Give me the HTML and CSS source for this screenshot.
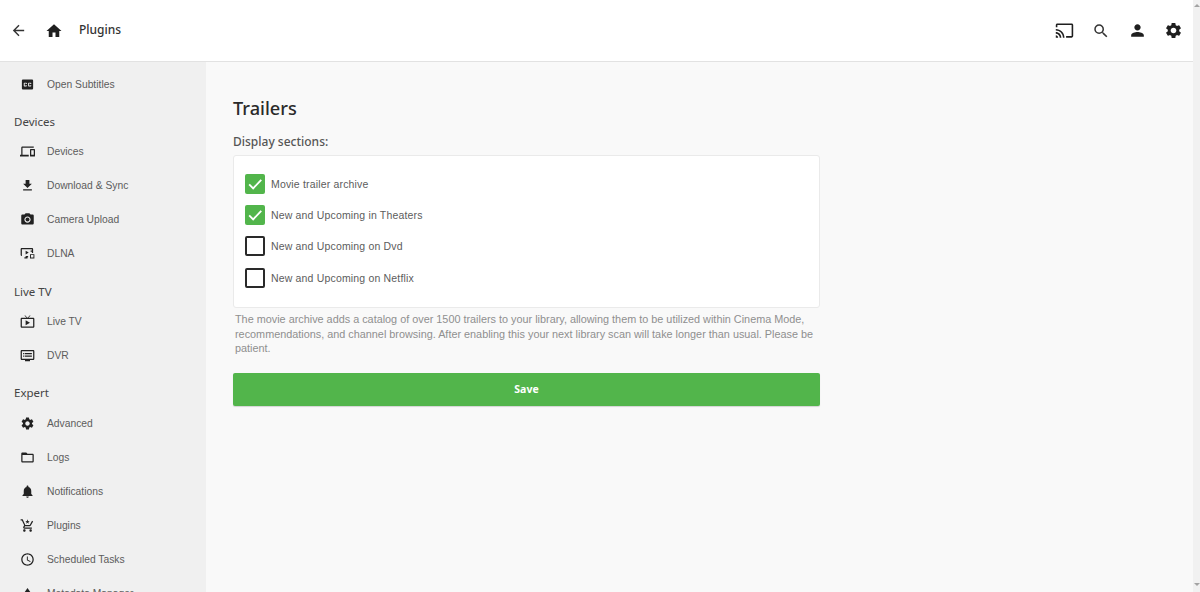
FILE: index.html
```html
<!DOCTYPE html>
<html lang="en">
<head>
<meta charset="utf-8">
<title>Plugins</title>
<link rel="stylesheet" href="styles.css">
</head>
<body>
<svg class="defs" width="0" height="0" aria-hidden="true"><defs>
<symbol id="gear" viewBox="0 0 24 24"><path d="M19.14 12.94c.04-.3.06-.61.06-.94 0-.32-.02-.64-.07-.94l2.03-1.58a.49.49 0 0 0 .12-.61l-1.92-3.32a.488.488 0 0 0-.59-.22l-2.39.96c-.5-.38-1.03-.7-1.62-.94l-.36-2.54a.484.484 0 0 0-.48-.41h-3.84c-.24 0-.43.17-.47.41l-.36 2.54c-.59.24-1.13.57-1.62.94l-2.39-.96c-.22-.08-.47 0-.59.22L2.74 8.87c-.12.21-.08.47.12.61l2.03 1.58c-.05.3-.09.63-.09.94s.02.64.07.94l-2.03 1.58a.49.49 0 0 0-.12.61l1.92 3.32c.12.22.37.29.59.22l2.39-.96c.5.38 1.03.7 1.62.94l.36 2.54c.05.24.24.41.48.41h3.84c.24 0 .44-.17.47-.41l.36-2.54c.59-.24 1.13-.56 1.62-.94l2.39.96c.22.08.47 0 .59-.22l1.92-3.32c.12-.22.07-.47-.12-.61l-2.01-1.58zM12 15.6c-1.98 0-3.6-1.62-3.6-3.6s1.62-3.6 3.6-3.6 3.6 1.62 3.6 3.6-1.62 3.6-3.6 3.6z"/></symbol>
</defs></svg>
<div class="page">
<header class="topbar">
  <div class="top-left">
    <button class="icon-btn"><svg class="back" viewBox="0 0 24 24"><path d="M20 11H7.830l5.590-5.590L12 4l-8 8 8 8 1.410-1.410L7.830 13H20v-2z"/></svg></button>
    <button class="icon-btn"><svg viewBox="0 0 24 24"><path d="M10 20v-6h4v6h5v-8h3L12 3 2 12h3v8z"/></svg></button>
    <span class="page-title">Plugins</span>
  </div>
  <div class="top-right">
    <button class="icon-btn"><svg viewBox="0 0 24 24"><path d="M21 3H3c-1.100 0-2 .9-2 2v3h2V5h18v14h-7v2h7c1.100 0 2-.9 2-2V5c0-1.100-.9-2-2-2zM1 18v3h3c0-1.660-1.340-3-3-3zm0-4v2c2.760 0 5 2.240 5 5h2c0-3.870-3.130-7-7-7zm0-4v2c4.970 0 9 4.030 9 9h2c0-6.080-4.930-11-11-11z"/></svg></button>
    <button class="icon-btn"><svg class="search" viewBox="0 0 24 24"><path d="M15.500 14h-.79l-.28-.27A6.471 6.471 0 0 0 16 9.500 6.500 6.500 0 1 0 9.500 16c1.610 0 3.090-.59 4.230-1.570l.27.28v.79l5 4.990L20.490 19l-4.990-5zm-6 0C7.010 14 5 11.990 5 9.500S7.010 5 9.500 5 14 7.010 14 9.500 11.990 14 9.500 14z"/></svg></button>
    <button class="icon-btn"><svg viewBox="0 0 24 24"><path d="M12 12c2.210 0 4-1.790 4-4s-1.790-4-4-4-4 1.790-4 4 1.790 4 4 4zm0 2c-2.670 0-8 1.340-8 4v2h16v-2c0-2.660-5.330-4-8-4z"/></svg></button>
    <button class="icon-btn"><svg viewBox="0 0 24 24"><use href="#gear"/></svg></button>
  </div>
</header>
<div class="layout">
  <nav class="sidebar">
    <a class="nav-item"><svg viewBox="0 0 24 24"><path d="M19 4H5c-1.110 0-2 .9-2 2v12c0 1.100.89 2 2 2h14c1.100 0 2-.9 2-2V6c0-1.100-.9-2-2-2zm-8 7H9.500v-.5h-2v3h2V13H11v1c0 .55-.45 1-1 1H7c-.55 0-1-.45-1-1v-4c0-.55.45-1 1-1h3c.55 0 1 .45 1 1v1zm7 0h-1.500v-.5h-2v3h2V13H18v1c0 .55-.45 1-1 1h-3c-.55 0-1-.45-1-1v-4c0-.55.45-1 1-1h3c.55 0 1 .45 1 1v1z"/></svg><span>Open Subtitles</span></a>
    <h3 class="nav-head">Devices</h3>
    <a class="nav-item"><svg viewBox="0 0 24 24"><path d="M4 6h18V4H4c-1.100 0-2 .9-2 2v11H0v3h14v-3H4V6zm19 2h-6c-.55 0-1 .45-1 1v10c0 .55.45 1 1 1h6c.55 0 1-.45 1-1V9c0-.55-.45-1-1-1zm-1 9h-4v-7h4v7z"/></svg><span>Devices</span></a>
    <a class="nav-item"><svg viewBox="0 0 24 24"><path d="M19 9h-4V3H9v6H5l7 7 7-7zM5 18v2h14v-2H5z"/></svg><span>Download &amp; Sync</span></a>
    <a class="nav-item"><svg viewBox="0 0 24 24"><circle cx="12" cy="12" r="3.200"/><path d="M9 2 7.170 4H4c-1.100 0-2 .9-2 2v12c0 1.100.9 2 2 2h16c1.100 0 2-.9 2-2V6c0-1.100-.9-2-2-2h-3.170L15 2H9zm3 15c-2.760 0-5-2.240-5-5s2.240-5 5-5 5 2.240 5 5-2.240 5-5 5z"/></svg><span>Camera Upload</span></a>
    <a class="nav-item"><svg viewBox="0 0 24 24"><path d="M3 3h16c1.100 0 2 .9 2 2v6h-2V5H3v11h10v2h-1v2H7v-2h2v-2H3c-1.100 0-2-.9-2-2V5c0-1.100.9-2 2-2zm6 4.500 5 3-5 3v-6zM16 13h7v7h-7v-7zm1.500 1.500v4h4v-4h-4zM17 7h4v2h-4z"/></svg><span>DLNA</span></a>
    <h3 class="nav-head">Live TV</h3>
    <a class="nav-item"><svg viewBox="0 0 24 24"><path d="M21 6h-7.590l3.290-3.290L16 2l-4 4-4-4-.71.71L10.590 6H3c-1.100 0-2 .89-2 2v12c0 1.100.9 2 2 2h18c1.100 0 2-.9 2-2V8c0-1.110-.9-2-2-2zm0 14H3V8h18v12zM9 10v8l7-4z"/></svg><span>Live TV</span></a>
    <a class="nav-item"><svg viewBox="0 0 24 24"><path d="M21 3H3c-1.100 0-2 .9-2 2v12c0 1.100.9 2 2 2h5v2h8v-2h5c1.100 0 1.990-.9 1.990-2L23 5c0-1.100-.9-2-2-2zm0 14H3V5h18v12zM19 8H8v2h11V8zm0 4H8v2h11v-2zM7 8H5v2h2V8zm0 4H5v2h2v-2z"/></svg><span>DVR</span></a>
    <h3 class="nav-head">Expert</h3>
    <a class="nav-item"><svg viewBox="0 0 24 24"><use href="#gear"/></svg><span>Advanced</span></a>
    <a class="nav-item"><svg viewBox="0 0 24 24"><path d="M20 6h-8l-2-2H4c-1.100 0-1.990.9-1.990 2L2 18c0 1.100.9 2 2 2h16c1.100 0 2-.9 2-2V8c0-1.100-.9-2-2-2zm0 12H4V8h16v10z"/></svg><span>Logs</span></a>
    <a class="nav-item"><svg viewBox="0 0 24 24"><path d="M12 22c1.100 0 2-.9 2-2h-4c0 1.100.9 2 2 2zm6-6v-5c0-3.070-1.630-5.640-4.500-6.320V4c0-.83-.67-1.500-1.500-1.500s-1.500.67-1.500 1.500v.68C7.640 5.360 6 7.920 6 11v5l-2 2v1h16v-1l-2-2z"/></svg><span>Notifications</span></a>
    <a class="nav-item"><svg viewBox="0 0 24 24"><path d="M15.550 13c.75 0 1.410-.41 1.750-1.030L21 5.500l-1.750-1-3.700 6.500H8.530L4.270 2H1v2h2l3.600 7.590-1.350 2.440C4.520 15.370 5.480 17 7 17h12v-2H7l1.100-2h7.450zM7 18c-1.100 0-1.990.9-1.990 2S5.900 22 7 22s2-.9 2-2-.9-2-2-2zm10 0c-1.100 0-1.990.9-1.990 2s.89 2 1.990 2 2-.9 2-2-.9-2-2-2zM12 2l.9 2.600 2.600.1-2.100 1.600.8 2.700-2.200-1.600-2.200 1.600.8-2.700-2.100-1.600 2.600-.1z"/></svg><span>Plugins</span></a>
    <a class="nav-item"><svg viewBox="0 0 24 24"><path d="M11.990 2C6.470 2 2 6.480 2 12s4.470 10 9.990 10C17.520 22 22 17.520 22 12S17.520 2 11.990 2zM12 20c-4.420 0-8-3.580-8-8s3.580-8 8-8 8 3.580 8 8-3.580 8-8 8zm.5-13H11v6l5.250 3.150.75-1.230-4.500-2.670z"/></svg><span>Scheduled Tasks</span></a>
    <a class="nav-item"><svg viewBox="0 0 24 24"><path d="M12 3 6 12h12zM4 14h7v7H4zm13.500 0a3.500 3.500 0 1 0 0 7 3.500 3.500 0 0 0 0-7z"/></svg><span>Metadata Manager</span></a>
  </nav>
  <main class="content">
    <h1 class="title">Trailers</h1>
    <h2 class="subtitle">Display sections:</h2>
    <div class="card">
      <label class="check"><span class="box on"><svg viewBox="0 0 24 24"><path d="M5 12.500l4.800 4.800L19.500 7"/></svg></span>Movie trailer archive</label>
      <label class="check"><span class="box on"><svg viewBox="0 0 24 24"><path d="M5 12.500l4.800 4.800L19.500 7"/></svg></span>New and Upcoming in Theaters</label>
      <label class="check"><span class="box"></span>New and Upcoming on Dvd</label>
      <label class="check"><span class="box"></span>New and Upcoming on Netflix</label>
    </div>
    <p class="help">The movie archive adds a catalog of over 1500 trailers to your library, allowing them to be utilized within Cinema Mode, recommendations, and channel browsing. After enabling this your next library scan will take longer than usual. Please be patient.</p>
    <button class="save">Save</button>
  </main>
</div>
</div>
<div class="scrollbar"></div>
</body>
</html>
```
FILE: styles.css
```css
* { box-sizing: border-box; }
html, body { margin: 0; height: 100%; overflow: hidden; }
body { font-family: "Liberation Sans", Arial, sans-serif; color: #222; background: #f9f9f9; display: flex; height: 592px; }
.defs { position: absolute; }
.page { flex: 1; min-width: 0; display: flex; flex-direction: column; }
.scrollbar { width: 7px; flex: none; background: #f1f1f1; display: flex; flex-direction: column; justify-content: space-between; align-items: center; padding: 4px 0 6px; }
.scrollbar::before, .scrollbar::after { content: ""; width: 0; height: 0; border-left: 3px solid transparent; border-right: 3px solid transparent; }
.scrollbar::before { border-bottom: 3px solid #a3a3a3; }
.scrollbar::after { border-top: 3px solid #a3a3a3; }
.topbar { height: 62px; flex: none; background: #fff; border-bottom: 1px solid #e2e2e2; display: flex; justify-content: space-between; align-items: center; padding: 0 1px 0 0; }
.top-left, .top-right { display: flex; align-items: center; }
.icon-btn { width: 36.500px; height: 36px; border: 0; background: none; padding: 0; display: flex; align-items: center; justify-content: center; }
.top-left .icon-btn { width: 36px; }
.top-left .icon-btn svg { width: 18px; height: 18px; }
.top-left .icon-btn svg.back { width: 17px; height: 17px; fill: #333; }
.icon-btn svg { width: 19px; height: 19px; fill: #1f1f1f; }
.icon-btn svg.search { width: 18px; height: 18px; fill: #333; }
.page-title { font: 500 12px "Noto Sans", sans-serif; color: #333; margin: -2px 0 0 7px; }
.layout { flex: 1; display: flex; min-height: 0; }
.sidebar { width: 206px; flex: none; background: #f0f0f0; overflow: hidden; padding-top: 5px; }
.nav-item { display: flex; align-items: center; height: 34px; padding-left: 19.500px; font-size: 10.300px; color: #5c5c5c; }
.nav-item svg { width: 15px; height: 15px; fill: #222; flex: none; margin-right: 12.500px; }
.nav-head { margin: 0; height: 33.800px; padding: 7px 0 0 14px; display: flex; align-items: center; font: 400 11.500px "Noto Sans", sans-serif; color: #444; }
.content { flex: 1; padding: 32px 0 0 27px; }
.title { margin: 0 0 10px; font: 500 18.200px/28px "Noto Sans", sans-serif; color: #2a2a2a; }
.subtitle { margin: 0 0 3px; font: 500 12px/20px "Noto Sans", sans-serif; color: #555; }
.card { width: 587px; height: 153px; background: #fff; border: 1px solid #eaeaea; border-radius: 3px; padding: 12px 11px 0; }
.check { display: flex; align-items: center; height: 31.300px; font-size: 10.500px; letter-spacing: .17px; color: #5c5c5c; }
.box { width: 20px; height: 20px; border: 2px solid #2a2a2a; border-radius: 2px; margin-right: 6px; flex: none; display: flex; }
.box.on { background: #52b54b; border: 0; }
.box svg { width: 20px; height: 20px; fill: none; stroke: #fff; stroke-width: 2.200; }
.help { width: 587px; margin: 4px 0 0; padding-left: 2px; font-size: 10.850px; line-height: 14.500px; color: #8f8f8f; }
.save { display: block; width: 587px; height: 33px; margin-top: 17px; background: #52b54b; border: 0; border-radius: 2px; color: #fff; font: 700 10.500px "Noto Sans", sans-serif; box-shadow: 0 1px 1px rgba(0,0,0,.15); }
```
